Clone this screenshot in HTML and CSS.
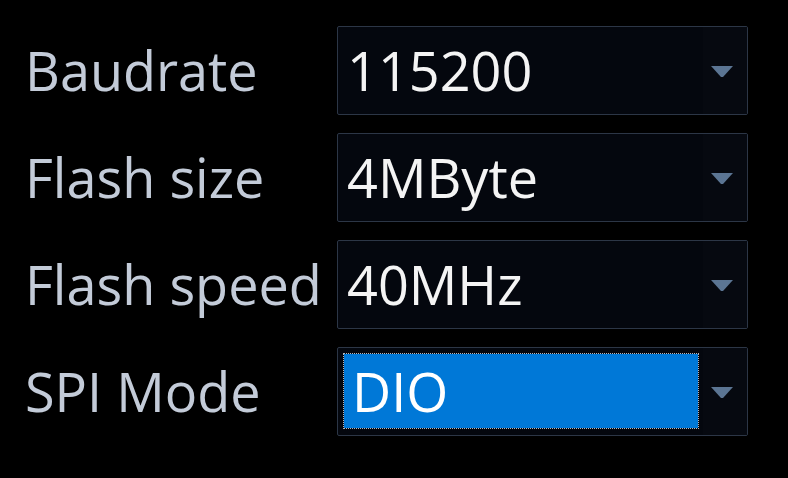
FILE: index.html
```html
<!DOCTYPE html>
<html>
<head>
<meta charset="utf-8">
<link rel="stylesheet" href="styles.css">
</head>
<body>
<div class="form">
  <div class="label">Baudrate</div>
  <div class="combo">
    <div class="value">115200</div>
    <div class="drop"><svg width="24" height="12" viewBox="0 0 24 12"><polygon points="1,0 23,0 13,11 11,11" fill="#5b7593"/></svg></div>
  </div>
  <div class="label">Flash size</div>
  <div class="combo">
    <div class="value">4MByte</div>
    <div class="drop"><svg width="24" height="12" viewBox="0 0 24 12"><polygon points="1,0 23,0 13,11 11,11" fill="#5b7593"/></svg></div>
  </div>
  <div class="label">Flash speed</div>
  <div class="combo">
    <div class="value">40MHz</div>
    <div class="drop"><svg width="24" height="12" viewBox="0 0 24 12"><polygon points="1,0 23,0 13,11 11,11" fill="#5b7593"/></svg></div>
  </div>
  <div class="label">SPI Mode</div>
  <div class="combo">
    <div class="value selected">DIO</div>
    <div class="drop"><svg width="24" height="12" viewBox="0 0 24 12"><polygon points="1,0 23,0 13,11 11,11" fill="#5b7593"/></svg></div>
  </div>
</div>
</body>
</html>
```
FILE: styles.css
```css
html, body {
  margin: 0;
  background: #000;
}
body {
  padding: 26px 0 0 25px;
  font-family: "Open Sans", "Noto Sans", sans-serif;
}
.form {
  display: grid;
  grid-template-columns: 312px 411px;
  grid-auto-rows: 89px;
  row-gap: 18px;
}
.label {
  display: flex;
  align-items: center;
  color: #c3cbd8;
  font-size: 54px;
  padding-bottom: 2px;
}
.combo {
  display: flex;
  border: 1px solid #2c3646;
  border-radius: 2px;
  background: #04070e;
  box-sizing: border-box;
}
.value {
  flex: 1;
  display: flex;
  align-items: center;
  margin: 6px 5px 7px 6px;
  padding-left: 3px;
  color: #f4f4f4;
  font-size: 54px;
}
.value.selected {
  background: #0078d7;
  outline: 1px dotted #b0b6c0;
  padding-left: 8px;
  color: #fff;
}
.drop {
  width: 44px;
  display: flex;
  align-items: center;
  justify-content: center;
  background: #060910;
}
.drop svg {
  display: block;
  margin-right: 6px;
  margin-top: 2px;
}
```
